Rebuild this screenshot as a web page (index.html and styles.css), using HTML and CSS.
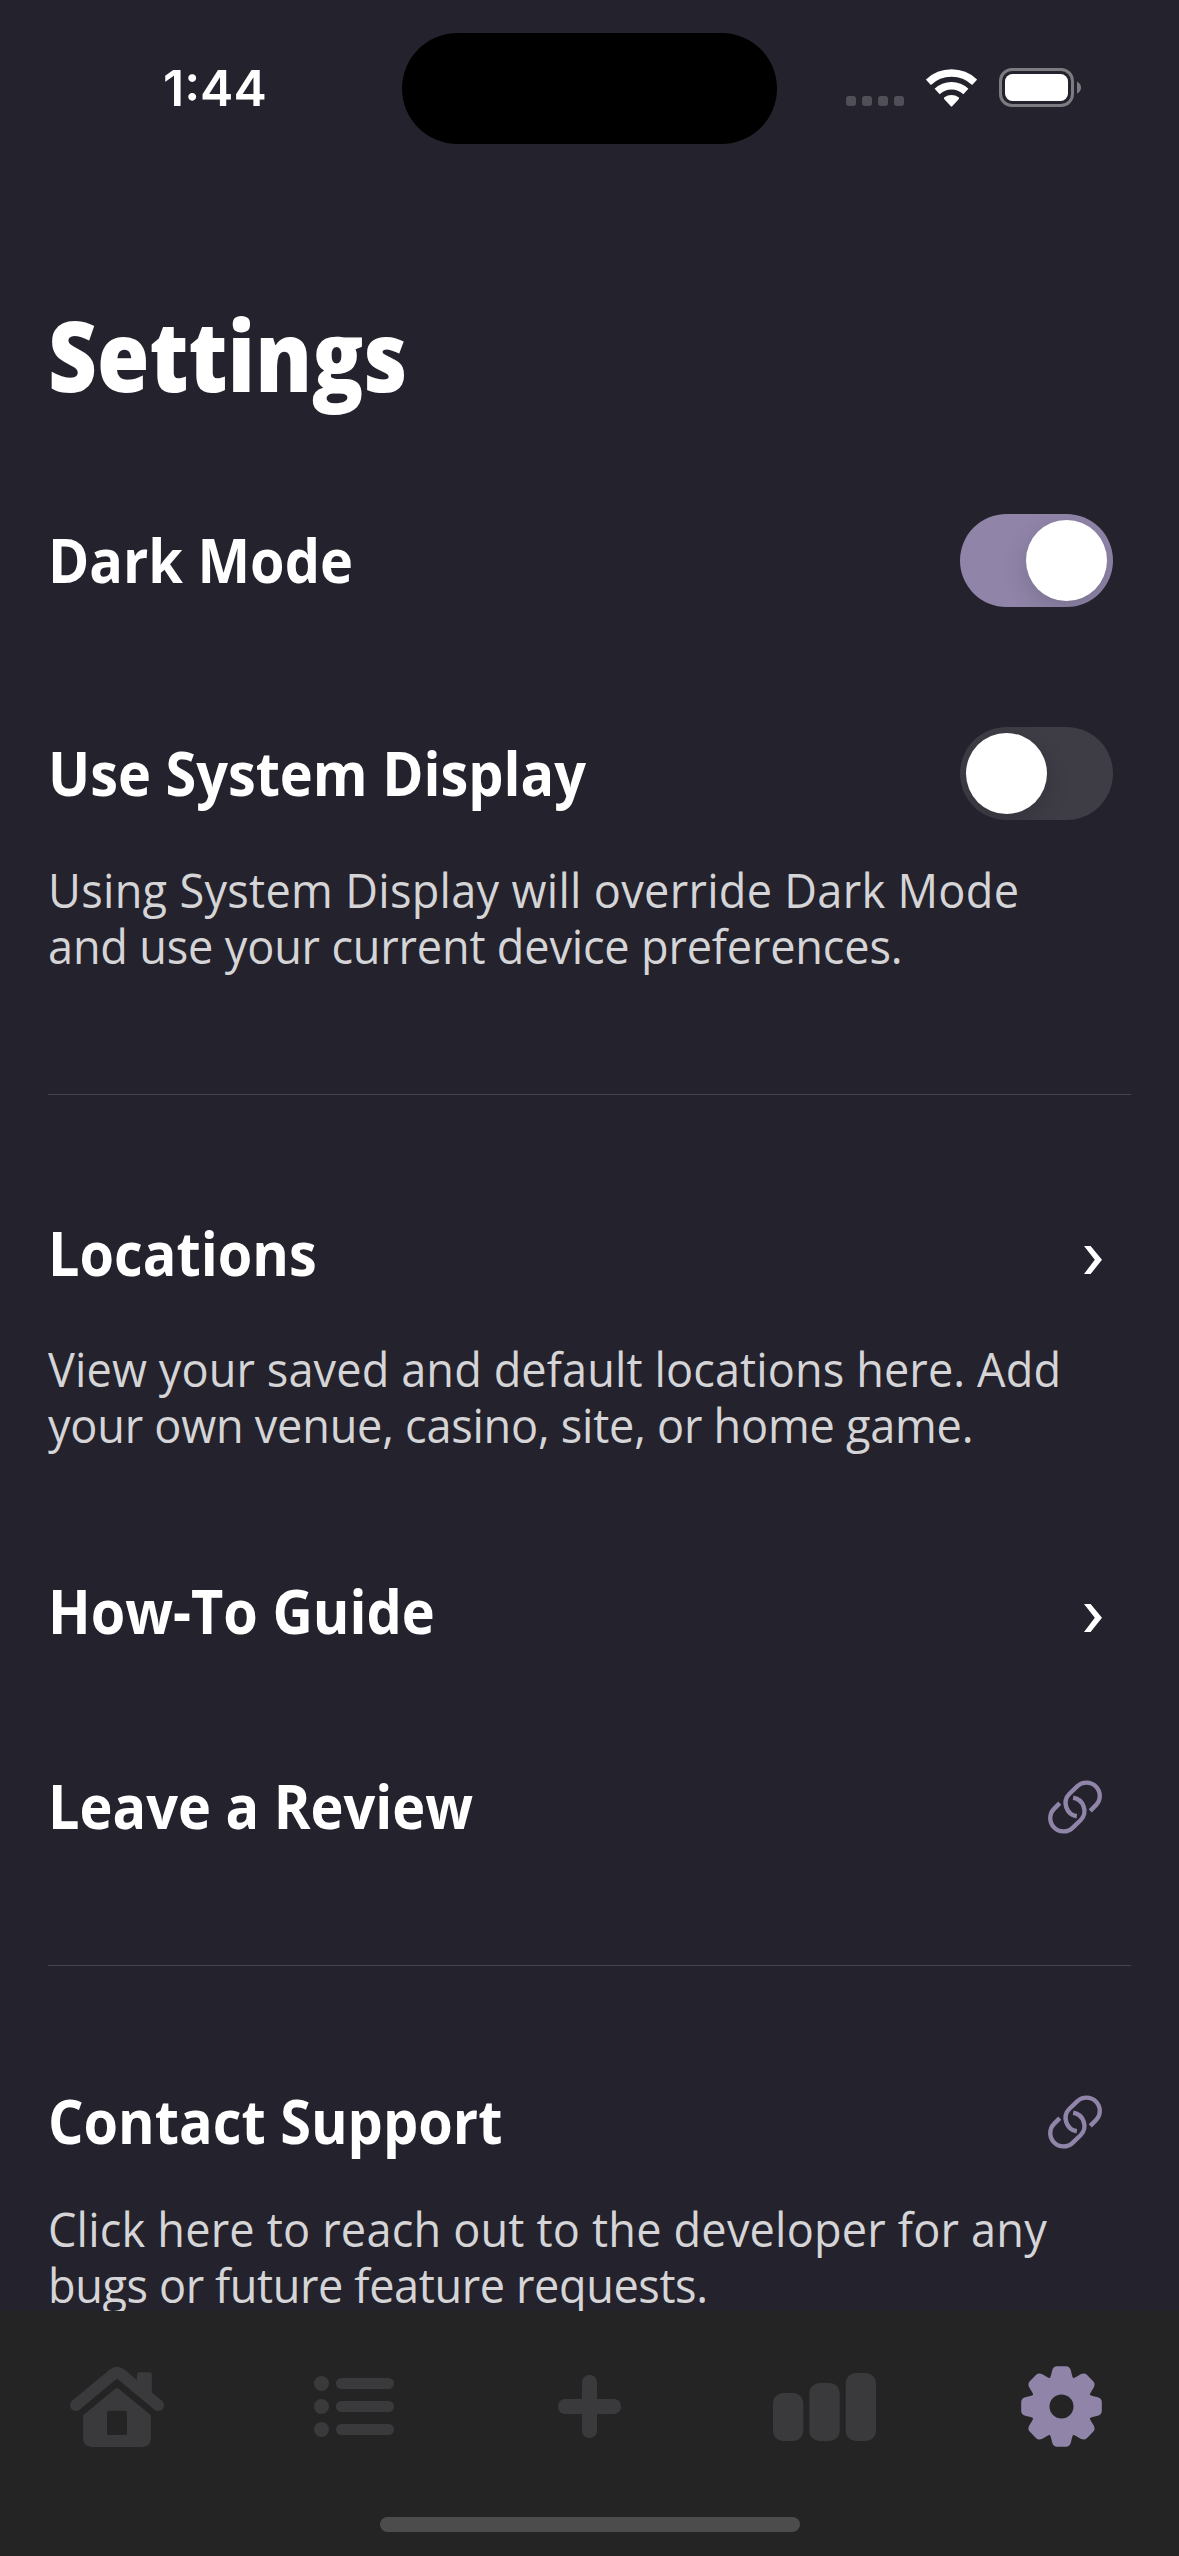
FILE: index.html
```html
<!DOCTYPE html>
<html lang="en">
<head>
<meta charset="utf-8">
<title>Settings</title>
<link rel="stylesheet" href="styles.css">
</head>
<body>
<svg class="defs" aria-hidden="true">
  <symbol id="link" viewBox="54 63 161 161">
    <g fill="none" stroke="currentColor" stroke-width="13">
      <path d="M180 155L197 138A39.6 39.6 0 0 0 141 82L118 104A39.6 39.6 0 0 0 140 171"/>
      <path d="M180 155L197 138A39.6 39.6 0 0 0 141 82L118 104A39.6 39.6 0 0 0 140 171" transform="rotate(180 134.5 143.5)"/>
    </g>
  </symbol>
  <symbol id="chevron" viewBox="0 0 18 28">
    <path fill="currentColor" d="M0 0H6.6L18 13.8 6.6 28H0L10.8 13.8Z"/>
  </symbol>
</svg>
<div class="screen">
  <header class="status">
    <div class="time">1:44</div>
    <div class="island"></div>
    <div class="indicators">
      <div class="dots"><i></i><i></i><i></i><i></i></div>
      <svg class="wifi" viewBox="-76 -112 152 113">
        <g fill="none" stroke="#fff" stroke-width="22">
          <path d="M-69 -72.5A100 100 0 0 1 69 -72.5"/>
          <path d="M-42.8 -45A62 62 0 0 1 42.8 -45"/>
        </g>
        <path fill="#fff" d="M-22 -23Q-24 -26 -21 -28A35 35 0 0 1 21 -28Q24 -26 22 -23L2 -1Q0 1 -2 -1Z"/>
      </svg>
      <svg class="battery" viewBox="0 0 82 39">
        <rect x="1.5" y="1.5" width="72" height="36" rx="11.5" fill="none" stroke="#7d7b82" stroke-width="3"/>
        <rect x="6" y="6" width="63" height="27" rx="7.5" fill="#fff"/>
        <path d="M78 13.5Q82 15.5 82 19.5T78 25.5Z" fill="#7d7b82"/>
      </svg>
    </div>
  </header>
  <main class="content">
    <h1 class="title"><span>Settings</span></h1>
    <div class="row dark-mode"><h2 class="label">Dark Mode</h2><div class="toggle on"><div class="knob"></div></div></div>
    <div class="row system"><h2 class="label">Use System Display</h2><div class="toggle"><div class="knob"></div></div></div>
    <p class="note system-note"><span class="line loose">Using System Display will override Dark Mode</span><span class="line snug">and use your current device preferences.</span></p>
    <hr class="rule">
    <div class="row locations"><h2 class="label">Locations</h2><svg class="chevron"><use href="#chevron"/></svg></div>
    <p class="note locations-note"><span class="line airy">View your saved and default locations here. Add</span><span class="line tight">your own venue, casino, site, or home game.</span></p>
    <div class="row guide"><h2 class="label">How-To Guide</h2><svg class="chevron"><use href="#chevron"/></svg></div>
    <div class="row review"><h2 class="label">Leave a Review</h2><svg class="link"><use href="#link"/></svg></div>
    <hr class="rule second">
    <div class="row support"><h2 class="label">Contact Support</h2><svg class="link"><use href="#link"/></svg></div>
    <p class="note support-note"><span class="line open">Click here to reach out to the developer for any</span><span class="line tighter">bugs or future feature requests.</span></p>
  </main>
  <nav class="tabbar">
    <div class="tabs">
      <div class="tab">
        <svg class="home" viewBox="60 50 282 244">
          <path d="M77 168L189 75Q201 66 213 75L325 168" fill="none" stroke="currentColor" stroke-width="35" stroke-linecap="round"/>
          <path fill="currentColor" d="M261 76Q261 69 268 69H299Q306 69 306 76V138L261 100Z"/>
          <path fill="currentColor" fill-rule="evenodd" d="M194 120Q201 114 208 120L303 198V268Q303 294 275 294H127Q99 294 99 268V198ZM176 185Q171 185 171 190V253Q171 258 176 258H226Q231 258 231 253V190Q231 185 226 185Z"/>
        </svg>
      </div>
      <div class="tab">
        <svg class="list" viewBox="0 0 80 61" fill="currentColor">
          <circle cx="7.5" cy="7.5" r="7.5"/><circle cx="7.5" cy="30.5" r="7.5"/><circle cx="7.5" cy="53.5" r="7.5"/>
          <rect x="22" y="2" width="58" height="11" rx="5.5"/><rect x="22" y="25" width="58" height="11" rx="5.5"/><rect x="22" y="48" width="58" height="11" rx="5.5"/>
        </svg>
      </div>
      <div class="tab">
        <svg class="plus" viewBox="0 0 63 63" fill="currentColor">
          <rect x="24" y="0" width="15" height="63" rx="7"/><rect x="0" y="24" width="63" height="15" rx="7"/>
        </svg>
      </div>
      <div class="tab">
        <svg class="bars" viewBox="0 0 103 68" fill="currentColor">
          <rect x="0" y="20" width="30.3" height="48" rx="10"/><rect x="36.3" y="10" width="30.4" height="58" rx="10"/><rect x="72.7" y="0" width="30.3" height="68" rx="10"/>
        </svg>
      </div>
      <div class="tab active">
        <svg class="gear" viewBox="-40.5 -40.5 81 81" fill="currentColor">
          <defs><path id="tooth" d="M-12 -28Q-11 -29 -10.3 -32L-9.3 -36.3Q-8 -40.3 -4.5 -40.3H4.5Q8 -40.3 9.3 -36.3L10.3 -32Q11 -29 12 -28L0 0Z"/></defs>
          <circle r="29.5"/>
          <use href="#tooth"/><use href="#tooth" transform="rotate(45)"/><use href="#tooth" transform="rotate(90)"/><use href="#tooth" transform="rotate(135)"/>
          <use href="#tooth" transform="rotate(180)"/><use href="#tooth" transform="rotate(225)"/><use href="#tooth" transform="rotate(270)"/><use href="#tooth" transform="rotate(315)"/>
          <circle r="12" class="hub"/>
        </svg>
      </div>
    </div>
    <div class="home-indicator"></div>
  </nav>
</div>
</body>
</html>
```
FILE: styles.css
```css
* { box-sizing: border-box; }

body {
  margin: 0;
  background: #24222c;
  font-family: "Open Sans", "Noto Sans", sans-serif;
  color: #fff;
}

.defs { display: none; }

.screen {
  display: flex;
  flex-direction: column;
  width: 1179px;
  height: 2556px;
  overflow: hidden;
}

/* Status bar */
.status {
  display: grid;
  grid-template-columns: 402px 375px 402px;
  flex: none;
  height: 177px;
  padding-top: 33px;
}
.time {
  padding-left: 163px;
  font: 600 50px/111px Inter, sans-serif;
}
.island {
  height: 111px;
  border-radius: 56px;
  background: #000;
}
.indicators {
  display: flex;
  padding: 35px 0 0 69px;
}
.dots {
  display: flex;
  gap: 6px;
  padding-top: 28px;
}
.dots i {
  width: 10px;
  height: 10px;
  border-radius: 3px;
  background: #504e57;
}
.wifi {
  width: 51px;
  height: 38px;
  margin-left: 22px;
  margin-top: 1px;
}
.battery {
  width: 82px;
  height: 39px;
  margin-left: 22px;
}

/* Settings list */
.content {
  flex: 1;
  min-height: 0;
  overflow: hidden;
  padding: 117px 48px 0;
}
.title {
  margin: 0;
  font-size: 97px;
  line-height: 120px;
  font-weight: 800;
}
.title span {
  display: inline-block;
  transform: scaleX(.875);
  transform-origin: left;
}
.row {
  display: flex;
  align-items: center;
  justify-content: space-between;
  height: 93px;
  padding-right: 29px;
}
.label {
  margin: 0;
  font-size: 61px;
  line-height: 93px;
  font-weight: 700;
  white-space: nowrap;
  transform: translateY(-1px) scaleX(.915);
  transform-origin: left;
}
.dark-mode { margin-top: 100px; padding-right: 18px; }
.system { margin-top: 120px; padding-right: 18px; }
.locations { margin-top: 112px; }
.guide { margin-top: 112px; }
.review { margin-top: 102px; }
.support { margin-top: 109px; }

.toggle {
  display: flex;
  width: 153px;
  height: 93px;
  padding: 6px;
  border-radius: 47px;
  background: #3e3c45;
  overflow: hidden;
}
.toggle.on {
  justify-content: flex-end;
  background: #9085a9;
}
.knob {
  width: 81px;
  height: 81px;
  border-radius: 50%;
  background: #fff;
  box-shadow: 0 9px 24px rgba(0, 0, 0, .15);
}

.chevron {
  width: 18px;
  height: 28px;
  margin-top: 13px;
}
.link {
  width: 54px;
  height: 54px;
  color: #9085a9;
}

.note {
  margin: 0;
  font-size: 47px;
  line-height: 56px;
  color: #d5d4d6;
}
.system-note { margin-top: 42px; }
.locations-note { margin-top: 41px; }
.support-note { margin-top: 33px; }
.line {
  display: block;
  white-space: nowrap;
  transform: scaleX(.96);
  transform-origin: left;
}
.loose { letter-spacing: .3px; }
.open { letter-spacing: .19px; }
.airy { letter-spacing: .1px; }
.snug { letter-spacing: -.2px; }
.tight { letter-spacing: -.26px; }
.tighter { letter-spacing: -.42px; }

.rule {
  height: 1px;
  margin: 120px 0 0;
  border: 0;
  background: #45434c;
}
.rule.second { margin-top: 112px; }

/* Tab bar */
.tabbar {
  flex: none;
  height: 245px;
  background: #242424;
}
.tabs {
  display: grid;
  grid-template-columns: repeat(5, 1fr);
  height: 191px;
}
.tab {
  display: flex;
  align-items: center;
  justify-content: center;
  color: #3a3a3c;
}
.tab.active { color: #9085a9; }
.home { width: 94px; height: 81px; margin-right: 2px; }
.list { width: 80px; height: 61px; }
.plus { width: 63px; height: 63px; }
.bars { width: 103px; height: 68px; margin-right: 1px; }
.gear { width: 81px; height: 81px; }
.hub { fill: #242424; }
.home-indicator {
  width: 420px;
  height: 15px;
  margin: 15px auto 0;
  border-radius: 8px;
  background: #4c4c4c;
}
```
